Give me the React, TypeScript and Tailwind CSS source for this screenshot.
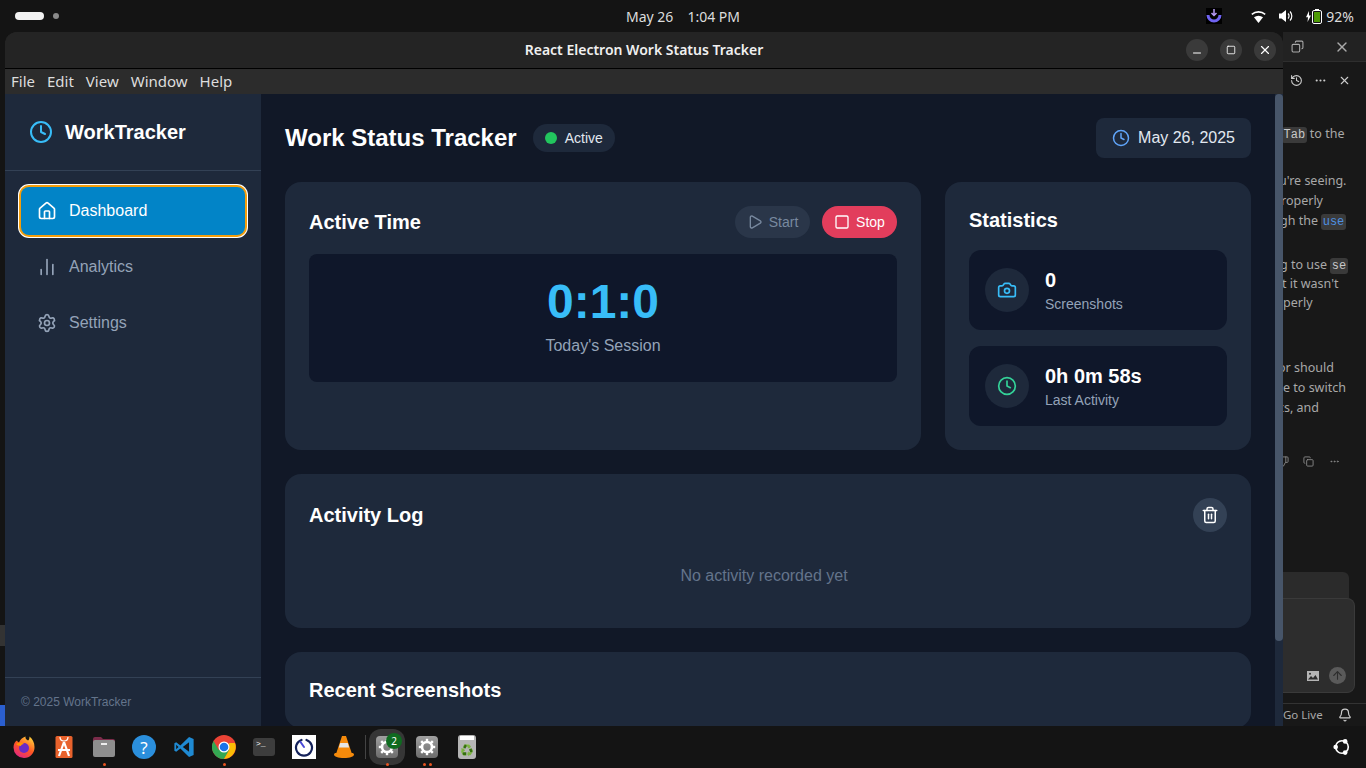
import { BarChart2, Camera, Clock, History, Home, Ellipsis, Play, Settings, Square, Trash2, X, Minus, Copy, Bell, ArrowUp, ThumbsDown } from "lucide-react";

const ubuntu = "font-['Noto_Sans','Open_Sans',sans-serif]";

function DockItem({ children, dots = 0, active = false }: { children: React.ReactNode; dots?: number; active?: boolean }) {
  return (
    <div className="relative flex h-[42px] w-10 shrink-0 items-center justify-center">
      {active && <div className="absolute left-[2px] top-[3px] h-9 w-9 rounded-xl bg-[#363636]" />}
      <div className="relative">{children}</div>
      {dots > 0 && (
        <div className="absolute bottom-[2px] left-0 right-0 flex justify-center gap-[3px]">
          {Array.from({ length: dots }).map((_, i) => (
            <span key={i} className="h-[3px] w-[3px] rounded-full bg-[#e95420]" />
          ))}
        </div>
      )}
    </div>
  );
}

function Gear() {
  const teeth = [0, 45, 90, 135, 180, 225, 270, 315];
  return (
    <div className="flex h-[22px] w-[22px] items-center justify-center rounded-[4px] bg-gradient-to-b from-[#a0a0a0] to-[#6c6c6c]">
      <svg width="18" height="18" viewBox="0 0 18 18" fill="none">
        <circle cx="9" cy="9" r="5" stroke="#ffffff" strokeWidth="2.600" />
        {teeth.map((a) => (
          <rect key={a} x="7.800" y="0.800" width="2.400" height="3" fill="#ffffff" transform={`rotate(${a} 9 9)`} />
        ))}
      </svg>
    </div>
  );
}

function Dock() {
  return (
    <div className="flex h-[42px] shrink-0 items-center bg-[#141414] pl-1">
      <DockItem>
        <svg width="24" height="24" viewBox="0 0 24 24">
          <defs>
            <linearGradient id="ff" x1="0.800" y1="0" x2="0.200" y2="1">
              <stop offset="0" stopColor="#ffd43b" />
              <stop offset="0.5" stopColor="#ff5722" />
              <stop offset="1" stopColor="#e0218a" />
            </linearGradient>
          </defs>
          <path d="M12 23a10.500 10.500 0 0 1-10.500-10.500C1.500 9 3 6.500 5 5.500c.5 1 1 1.500 2 2 1-3 3.500-5 6.500-6 -.5 2 1 3 2.500 4 1-.5 1.500-2 1.500-4 3 2.500 5 6 5 10.500A10.500 10.500 0 0 1 12 23z" fill="url(#ff)" />
          <circle cx="12" cy="13" r="5" fill="#6a2bc4" />
          <path d="M4 9c3-2 6-2 8 0-2 0-3 1-3 2 -2 0-4-1-5-2z" fill="#ff9500" />
        </svg>
      </DockItem>
      <DockItem>
        <svg width="20" height="24" viewBox="0 0 20 24">
          <rect x="1.500" y="1" width="17" height="22" rx="1.500" fill="#e8622c" />
          <path d="M6 2c0 3 2 4 4 4s4-1 4-4" fill="none" stroke="#fff" strokeWidth="1.200" />
          <path d="M10 7 5 21M10 7l5 14M4 15h12" fill="none" stroke="#fff" strokeWidth="2.200" />
        </svg>
      </DockItem>
      <DockItem dots={1}>
        <svg width="24" height="22" viewBox="0 0 24 22">
          <path d="M1 3a2 2 0 0 1 2-2h6l2 2h10a2 2 0 0 1 2 2v3H1z" fill="#7b2c4a" />
          <rect x="1" y="4" width="22" height="17" rx="2" fill="#8e8e8e" />
          <rect x="9" y="7" width="6" height="2" fill="#eee" />
        </svg>
      </DockItem>
      <DockItem>
        <div className={`flex h-6 w-6 items-center justify-center rounded-full bg-[#2b8fdc] text-[17px] leading-none text-white ${ubuntu}`}>?</div>
      </DockItem>
      <DockItem>
        <svg width="22" height="22" viewBox="0 0 24 24">
          <path d="M17.500 1 8 10.300 3.500 6.800 1.500 7.800v8.400l2 1 4.500-3.500L17.500 23l5-2.200V3.200zM17.500 6.800v10.400L10.700 12zM3.500 9.500 6 12l-2.500 2.500z" fill="#1f8ad2" />
        </svg>
      </DockItem>
      <DockItem dots={1}>
        <svg width="24" height="24" viewBox="0 0 24 24">
          <circle cx="12" cy="12" r="12" fill="#ea4335" />
          <path d="M1.600 6A12 12 0 0 0 12 24l5.200-9L12 12 6.800 15z" fill="#34a853" />
          <path d="M23 8A12 12 0 0 1 12 24l5.200-9-.2-7z" fill="#fbbc05" />
          <circle cx="12" cy="12" r="5.500" fill="#fff" />
          <circle cx="12" cy="12" r="4.300" fill="#1a73e8" />
        </svg>
      </DockItem>
      <DockItem>
        <div className="relative h-[18px] w-[22px] rounded-[3px] bg-[#3d3d3d]">
          <span className="absolute left-[3px] top-[1px] font-['Liberation_Mono',monospace] text-[8px] leading-[10px] text-white">&gt;_</span>
        </div>
      </DockItem>
      <DockItem>
        <div className="flex h-6 w-6 items-center justify-center bg-white">
          <svg width="20" height="20" viewBox="0 0 20 20" fill="none">
            <path d="M7.500 3a8 8 0 1 0 5 0" stroke="#14225a" strokeWidth="2.200" strokeLinecap="round" />
            <path d="M10 10 6.500 5" stroke="#4a49d8" strokeWidth="2" strokeLinecap="round" />
          </svg>
        </div>
      </DockItem>
      <DockItem>
        <svg width="22" height="24" viewBox="0 0 22 24">
          <path d="M9 1h4l6 18H3z" fill="#f58a0b" />
          <path d="M7.200 8h7.600l1.300 4.500H5.900z" fill="#e6e6e6" />
          <path d="M1 19.500c0-1 1-1.500 2-1.500h16c1 0 2 .5 2 1.500 0 2-4 3.500-10 3.500S1 21.500 1 19.500z" fill="#f58a0b" />
        </svg>
      </DockItem>
      <div className="mx-[1px] h-6 w-px bg-[#444]" />
      <DockItem active dots={1}>
        <Gear />
        <span className={`absolute -right-[4px] -top-[3px] flex h-4 w-4 items-center justify-center rounded-full bg-[#0f6b20] text-[10px] text-white ${ubuntu}`}>2</span>
      </DockItem>
      <DockItem dots={2}>
        <Gear />
      </DockItem>
      <DockItem>
        <div className="flex h-6 w-[18px] flex-col overflow-hidden rounded-[3px] bg-[#b5b5b5]">
          <div className="mx-[2px] mt-[1px] h-1 bg-white" />
          <div className="flex flex-1 items-center justify-center text-[11px] leading-none text-[#3fa535]">♻</div>
        </div>
      </DockItem>
      <div className="ml-auto mr-[15px] flex items-center">
        <svg width="18" height="18" viewBox="0 0 20 20" fill="none">
          <circle cx="10" cy="10" r="7" stroke="#fff" strokeWidth="1.800" />
          <circle cx="13.500" cy="3.800" r="2.600" fill="#fff" />
          <circle cx="13.500" cy="16.200" r="2.600" fill="#fff" />
          <circle cx="3" cy="10" r="2.600" fill="#fff" />
        </svg>
      </div>
    </div>
  );
}

function TopBar() {
  return (
    <div className={`flex h-8 shrink-0 items-center bg-[#141414] text-[#dcdcdc] ${ubuntu}`}>
      <span className="ml-[15px] h-2 w-[29px] rounded-full bg-[#f2f2f2]" />
      <span className="ml-[9px] h-[6px] w-[6px] rounded-full bg-[#8a8a8a]" />
      <div className="ml-[567px] flex w-[114px] justify-between text-[14px]">
        <span>May 26</span>
        <span>1:04 PM</span>
      </div>
      <div className="ml-auto flex items-center pr-3 text-[14px]">
        <svg width="16" height="16" viewBox="0 0 16 16" fill="none" className="bg-black">
          <path d="M2 7a6 6 0 0 0 12 0" stroke="#6f63f0" strokeWidth="3" />
          <path d="M8 1v6M5.500 5 8 7.500 10.500 5" stroke="#b79af5" strokeWidth="1.500" />
        </svg>
        <svg width="15" height="13" viewBox="0 0 15 13" className="ml-[29px]">
          <path d="M7.500 13 3 7.300a7 7 0 0 1 9 0z" fill="#fff" />
          <path d="M.8 4.300a10.500 10.500 0 0 1 13.400 0" fill="none" stroke="#fff" strokeWidth="1.600" />
        </svg>
        <svg width="14" height="14" viewBox="0 0 14 14" fill="none" className="ml-[13px]">
          <path d="M0 4.500h2.500L7 1v12L2.500 9.500H0z" fill="#fff" />
          <path d="M9 4.500a3.500 3.500 0 0 1 0 5M11 2.500a6.500 6.500 0 0 1 0 9" stroke="#fff" strokeWidth="1.200" />
        </svg>
        <svg width="5" height="11" viewBox="0 0 5 11" className="ml-[13px]">
          <path d="M3 0 0 6.200h2L1.500 11 5 4.500H3z" fill="#fff" />
        </svg>
        <div className="ml-[1px] flex flex-col items-center">
          <span className="h-[1px] w-1 bg-white" />
          <div className="flex h-[14px] w-[10px] rounded-[2px] border border-white p-[1px]">
            <div className="h-full w-full bg-[#4e9a06]" />
          </div>
        </div>
        <span className="ml-[4px]">92%</span>
      </div>
    </div>
  );
}

function CodeChip({ children, blue }: { children: React.ReactNode; blue?: boolean }) {
  return <span className={`rounded-[3px] bg-[#3a3a3a] px-[1.500px] py-[1px] font-['Liberation_Mono',monospace] text-[12px] ${blue ? "text-[#4d8fe0]" : "text-[#c8c8c8]"}`}>{children}</span>;
}

function RightPanel() {
  return (
    <div className={`flex w-[83px] shrink-0 flex-col overflow-hidden whitespace-nowrap bg-[#181818] text-[12.500px] text-[#a8a8a8] ${ubuntu}`}>
      <div className="flex h-[30px] shrink-0 items-center border-b border-[#2e2e2e] bg-[#222222] pl-[8px]">
        <Copy size={13} className="-scale-x-100 text-[#aaa]" />
        <X size={16} className="ml-[30px] text-[#aaa]" />
      </div>
      <div className="flex h-[37px] shrink-0 items-center pl-[7px] text-[#ccc]">
        <History size={13} />
        <Ellipsis size={13} className="ml-[11px]" />
        <X size={13} className="ml-[11px]" />
      </div>
      <div className="mt-[25px] h-5 leading-5"><span className="-ml-[1px]"><CodeChip>Tab</CodeChip></span> to the</div>
      <div className="mt-[27px] -ml-[4px] h-5 leading-5">u're seeing.</div>
      <div className="-ml-[2px] h-5 leading-5">roperly</div>
      <div className="-ml-[3px] h-[19px] leading-5">gh the <CodeChip blue>use</CodeChip></div>
      <div className="mt-[25px] -ml-[3px] h-[19px] leading-5">g to use <CodeChip>se</CodeChip></div>
      <div className="-ml-[1px] h-[19px] leading-5">t it wasn't</div>
      <div className="h-5 leading-5">perly</div>
      <div className="mt-[45px] -ml-[5px] h-5 leading-5">or should</div>
      <div className="h-5 leading-5">e to switch</div>
      <div className="-ml-[5px] h-5 leading-5">cs, and</div>
      <div className="mt-[33px] flex h-[20px] shrink-0 items-center pl-[20px] text-[#888]">
        <ThumbsDown size={11} className="-ml-[25px]" />
        <Copy size={11} className="ml-[14px]" />
        <Ellipsis size={11} className="ml-[15px]" />
      </div>
      <div className="mt-[101px] h-[26px] w-[66px] shrink-0 rounded-tr-md bg-[#2b2b2b]" />
      <div className="flex h-[95px] w-[72px] shrink-0 items-end justify-end rounded-r-lg border border-l-0 border-[#3a3a3a] bg-[#2d2d2d] pb-[8px] pr-[8px]">
        <svg width="12" height="10" viewBox="0 0 12 10" className="mb-[3px] mr-[10px]">
          <rect width="12" height="10" fill="#b5b5b5" />
          <path d="M1 8.500 4 5l2 2 2.500-3L11 8.500z" fill="#2d2d2d" />
          <circle cx="3" cy="2.800" r="1" fill="#2d2d2d" />
        </svg>
        <div className="flex h-[17px] w-[17px] items-center justify-center rounded-full bg-[#5a5a5a] text-[#2d2d2d]">
          <ArrowUp size={13} />
        </div>
      </div>
      <div className="mt-[10px] flex h-[22px] shrink-0 items-center border-t border-[#333] text-[11.500px]">
        <span>Go Live</span>
        <Bell size={14} className="ml-[15px] text-[#ccc]" />
      </div>
    </div>
  );
}

function Card({ children, className = "" }: { children: React.ReactNode; className?: string }) {
  return <section className={`rounded-2xl bg-[#1e293b] p-6 ${className}`}>{children}</section>;
}

function Stat({ icon, value, label }: { icon: React.ReactNode; value: string; label: string }) {
  return (
    <div className="flex h-20 items-center gap-4 rounded-xl bg-[#0f172a] px-4">
      <div className="flex h-11 w-11 items-center justify-center rounded-full bg-[#1e293b]">{icon}</div>
      <div>
        <div className="text-xl font-bold leading-7 text-white">{value}</div>
        <div className="text-sm leading-5 text-[#94a3b8]">{label}</div>
      </div>
    </div>
  );
}

function NavItem({ icon, label, active }: { icon: React.ReactNode; label: string; active?: boolean }) {
  return (
    <div className={`flex h-12 items-center gap-3 rounded-lg px-4 ${active ? "bg-[#0284c7] text-white shadow-[0_0_0_2px_#f59e0b,0_0_0_3px_#ffffff]" : "text-[#94a3b8]"}`}>
      {icon}
      <span className="text-base">{label}</span>
    </div>
  );
}

function Sidebar() {
  return (
    <aside className="flex w-64 shrink-0 flex-col bg-[#1e293b]">
      <div className="flex h-[77px] shrink-0 items-center gap-3 border-b border-[#334155] px-6 pb-px">
        <Clock size={24} className="text-[#38bdf8]" />
        <span className="text-xl font-bold text-white">WorkTracker</span>
      </div>
      <nav className="flex flex-1 flex-col gap-2 p-4">
        <NavItem active icon={<Home size={20} />} label="Dashboard" />
        <NavItem icon={<BarChart2 size={20} />} label="Analytics" />
        <NavItem icon={<Settings size={20} />} label="Settings" />
      </nav>
      <div className="border-t border-[#334155] p-4 text-xs leading-4 text-[#64748b]">© 2025 WorkTracker</div>
    </aside>
  );
}

function Main() {
  return (
    <main className="min-w-0 flex-1 overflow-hidden bg-[#111827] p-6">
      <header className="mb-6 flex h-10 items-center">
        <h1 className="text-2xl font-bold text-white">Work Status Tracker</h1>
        <div className="ml-4 flex h-7 items-center gap-2 rounded-full bg-[#1e293b] px-3 text-sm text-[#e2e8f0]">
          <span className="h-3 w-3 rounded-full bg-[#22c55e]" />
          Active
        </div>
        <div className="ml-auto flex h-10 items-center gap-2 rounded-lg bg-[#1e293b] px-4 text-base text-[#e2e8f0]">
          <Clock size={18} className="text-[#60a5fa]" />
          May 26, 2025
        </div>
      </header>
      <div className="mb-6 grid h-[268px] grid-cols-[636px_306px] gap-6">
        <Card>
          <div className="mb-4 flex h-8 items-center justify-between">
            <h2 className="text-xl font-bold text-white">Active Time</h2>
            <div className="flex gap-3">
              <button className="flex h-8 w-[75px] items-center justify-center gap-[6px] rounded-full bg-[#2a3649] text-sm text-[#78899f]">
                <Play size={16} />
                Start
              </button>
              <button className="flex h-8 w-[75px] items-center justify-center gap-[6px] rounded-full bg-[#e23d5c] text-sm text-white">
                <Square size={16} />
                Stop
              </button>
            </div>
          </div>
          <div className="flex h-32 flex-col items-center rounded-lg bg-[#0f172a] pt-6">
            <div className="text-5xl font-bold leading-[48px] text-[#38bdf8]">0:1:0</div>
            <div className="mt-2 text-base leading-6 text-[#94a3b8]">Today's Session</div>
          </div>
        </Card>
        <Card>
          <h2 className="mb-4 text-xl font-bold leading-7 text-white">Statistics</h2>
          <div className="flex flex-col gap-4">
            <Stat icon={<Camera size={20} className="text-[#38bdf8]" />} value="0" label="Screenshots" />
            <Stat icon={<Clock size={20} className="text-[#34d399]" />} value="0h 0m 58s" label="Last Activity" />
          </div>
        </Card>
      </div>
      <Card className="mb-6">
        <div className="mb-4 flex h-[34px] items-center justify-between">
          <h2 className="text-xl font-bold text-white">Activity Log</h2>
          <button className="flex h-[34px] w-[34px] items-center justify-center rounded-full bg-[#334155] text-white">
            <Trash2 size={18} />
          </button>
        </div>
        <div className="py-4 pr-2 text-center text-base leading-6 text-[#64748b]">No activity recorded yet</div>
      </Card>
      <Card>
        <h2 className="text-xl font-bold leading-7 text-white">Recent Screenshots</h2>
      </Card>
    </main>
  );
}

function AppWindow() {
  return (
    <div className="flex h-[694px] w-[1278px] shrink-0 flex-col overflow-hidden rounded-t-xl bg-[#242424]">
      <div className="flex h-[37px] shrink-0 items-center justify-between border-b border-black bg-[#242424]">
        <div className="w-[110px]" />
        <span className={`-translate-y-[1px] text-[14px] font-semibold text-[#f0f0f0] ${ubuntu}`}>React Electron Work Status Tracker</span>
        <div className="flex w-[110px] items-center justify-end gap-3 pr-[7px]">
          <span className="flex h-[22px] w-[22px] items-center justify-center rounded-full bg-[#3a3a3a] text-white"><Minus size={12} strokeWidth={2} className="translate-y-[3px]" /></span>
          <span className="flex h-[22px] w-[22px] items-center justify-center rounded-full bg-[#3a3a3a] text-white"><Square size={10} strokeWidth={2} /></span>
          <span className="flex h-[22px] w-[22px] items-center justify-center rounded-full bg-[#3a3a3a] text-white"><X size={14} strokeWidth={2} /></span>
        </div>
      </div>
      <div className={`flex h-[25px] shrink-0 items-center gap-[12px] bg-[#2c2c2c] pl-[6px] text-[15px] text-[#dddddd] ${ubuntu}`}>
        <span>File</span>
        <span>Edit</span>
        <span>View</span>
        <span>Window</span>
        <span>Help</span>
      </div>
      <div className="flex min-h-0 flex-1 font-['Liberation_Sans',Arial,sans-serif]">
        <Sidebar />
        <Main />
        <div className="w-2 shrink-0 bg-[#1e293b]">
          <div className="h-[547px] rounded-full bg-[#475569]" />
        </div>
      </div>
    </div>
  );
}

export default function App() {
  return (
    <div className="flex h-screen w-screen flex-col overflow-hidden bg-[#141414]">
      <TopBar />
      <div className="flex min-h-0 flex-1">
        <div className="flex w-[5px] shrink-0 flex-col bg-[#141414]">
          <div className="mt-[593px] h-[21px] bg-[#333333]" />
          <div className="mt-[59px] h-[21px] bg-[#2b5fd0]" />
        </div>
        <AppWindow />
        <RightPanel />
      </div>
      <Dock />
    </div>
  );
}
